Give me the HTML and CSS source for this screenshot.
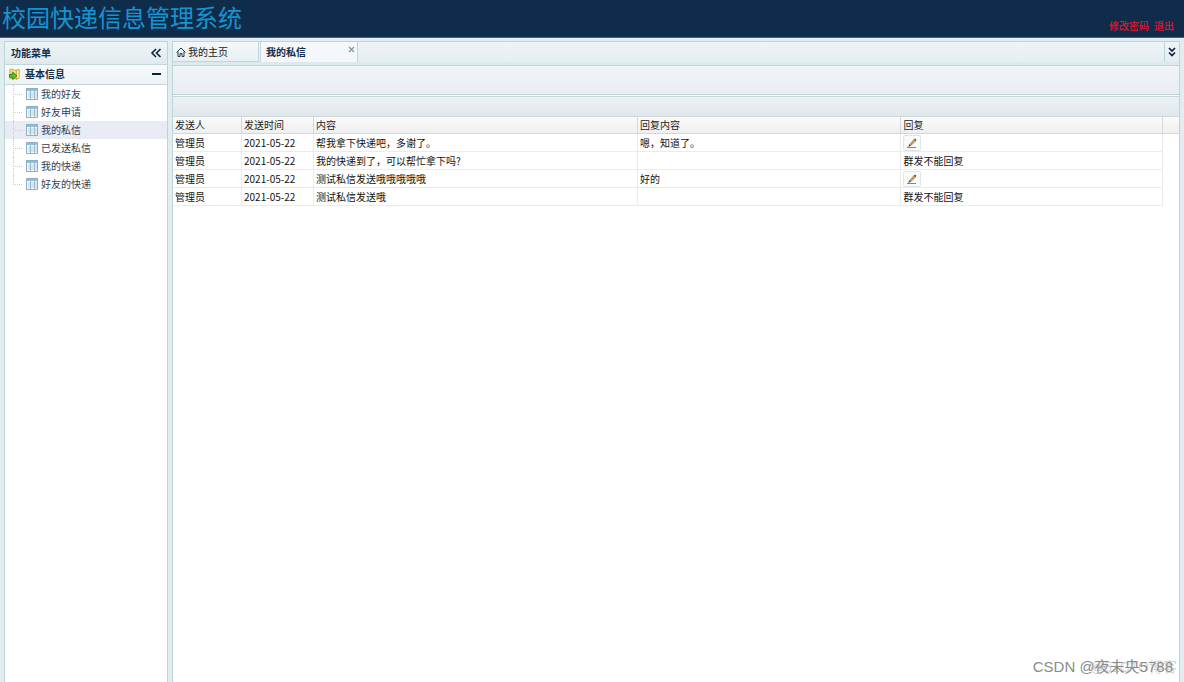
FILE: index.html
```html
<!DOCTYPE html>
<html lang="zh-CN">
<head>
<meta charset="utf-8">
<title>校园快递信息管理系统</title>
<link rel="stylesheet" href="styles.css">
</head>
<body>
<svg class="defs" aria-hidden="true">
  <symbol id="grid" viewBox="0 0 12 12">
    <rect x="0.5" y="0.5" width="11" height="11" fill="#f3f8fb" stroke="#8fb0c4"/>
    <path d="M1 1h10v2H1z" fill="#92bdd6"/>
    <path d="M4.5 3v8M8.5 3v8" stroke="#9bbccd"/>
    <path d="M2 5h2M5 5h3M9 5h2M2 7h2M5 7h3M9 7h2M2 9h2M5 9h3M9 9h2" stroke="#b7d0df"/>
  </symbol>
  <symbol id="pencil" viewBox="0 0 12 12">
    <path d="M3.500 7.500 8 2.500l1.500 1.500L5 8.500z" fill="#c9a25c" stroke="#8a6d3c" stroke-width=".6"/>
    <path d="m8 2.500 1-1L10.500 3l-1 1z" fill="#5a3d47"/>
    <path d="m3.500 7.500-1.500 2.500 3-1.500z" fill="#343434"/>
    <path d="M1 10.500h9" stroke="#7c878c"/>
  </symbol>
</svg>
<header class="banner">
  <h1>校园快递信息管理系统</h1>
  <nav class="account"><a href="#password">修改密码</a><a href="#logout">退出</a></nav>
</header>
<div class="shell">
  <aside class="sidebar">
    <div class="side-title"><h2>功能菜单</h2>
      <button class="tool" aria-label="收起菜单"><svg width="12" height="12" viewBox="0 0 12 12"><path d="M6 2 2 6l4 4M10.500 2l-4 4 4 4" fill="none" stroke="#0d223f" stroke-width="1.600"/></svg></button>
    </div>
    <div class="group-title">
      <svg width="12" height="14" viewBox="0 0 13 14"><path d="M1 4V2h4l1 1h4v9H1z" fill="#f5dc83" stroke="#c8a83d"/><path d="m8 3 3-1v9l-3 2z" fill="#fff0a8" stroke="#c3a33c"/><path d="M.5 7.500H4V5l4.500 4L4 13v-2.500H.5z" fill="#62bf32" stroke="#26851d"/></svg>
      <h3>基本信息</h3>
      <button class="tool" aria-label="折叠基本信息"><svg width="12" height="12" viewBox="0 0 12 12"><path d="M2 6h9" stroke="#0d223f" stroke-width="2"/></svg></button>
    </div>
    <ul class="tree">
      <li><a href="#friends"><svg width="12" height="12"><use href="#grid"/></svg>我的好友</a></li>
      <li><a href="#requests"><svg width="12" height="12"><use href="#grid"/></svg>好友申请</a></li>
      <li class="selected"><a href="#messages"><svg width="12" height="12"><use href="#grid"/></svg>我的私信</a></li>
      <li><a href="#sent"><svg width="12" height="12"><use href="#grid"/></svg>已发送私信</a></li>
      <li><a href="#parcels"><svg width="12" height="12"><use href="#grid"/></svg>我的快递</a></li>
      <li><a href="#friend-parcels"><svg width="12" height="12"><use href="#grid"/></svg>好友的快递</a></li>
    </ul>
  </aside>
  <main class="content">
    <div class="tabs">
      <button class="tab home"><svg width="10" height="10" viewBox="0 0 10 10"><path d="M.5 5.500 5 1l4.500 4.500M2 4.500v5h2V6.500h2v3h2v-5" fill="none" stroke="#263b52"/></svg>我的主页</button>
      <div class="tab current"><button class="tab-name">我的私信</button><button class="close" aria-label="关闭我的私信"><svg width="7" height="7" viewBox="0 0 7 7"><path d="m1 1 5 5M6 1 1 6" stroke="#8297a3" stroke-width="1.300"/></svg></button></div>
      <button class="more" aria-label="更多"><svg width="10" height="10" viewBox="0 0 10 10"><path d="m2 1 3 3 3-3M2 5.500l3 3 3-3" fill="none" stroke="#0d223f" stroke-width="1.700"/></svg></button>
    </div>
    <div class="toolbar"></div>
    <div class="caption"></div>
    <table class="messages">
      <colgroup><col class="c-sender"><col class="c-time"><col class="c-body"><col class="c-answer"><col><col class="c-end"></colgroup>
      <thead><tr><th>发送人</th><th>发送时间</th><th>内容</th><th>回复内容</th><th>回复</th><th></th></tr></thead>
      <tbody>
        <tr><td>管理员</td><td>2021-05-22</td><td>帮我拿下快递吧，多谢了。</td><td>嗯，知道了。</td><td><button class="edit" aria-label="回复"><svg width="12" height="12"><use href="#pencil"/></svg></button></td><td></td></tr>
        <tr><td>管理员</td><td>2021-05-22</td><td>我的快递到了，可以帮忙拿下吗?</td><td></td><td>群发不能回复</td><td></td></tr>
        <tr><td>管理员</td><td>2021-05-22</td><td>测试私信发送哦哦哦哦哦</td><td>好的</td><td><button class="edit" aria-label="回复"><svg width="12" height="12"><use href="#pencil"/></svg></button></td><td></td></tr>
        <tr><td>管理员</td><td>2021-05-22</td><td>测试私信发送哦</td><td></td><td>群发不能回复</td><td></td></tr>
      </tbody>
    </table>
  </main>
</div>
<div class="mark mark-small">@51CTO博客</div>
<div class="mark">CSDN @夜未央5788</div>
</body>
</html>
```
FILE: styles.css
```css
* { box-sizing: border-box; }
body {
  margin: 0;
  height: 100vh;
  display: flex;
  flex-direction: column;
  overflow: hidden;
  background: #e1edf0;
  color: #222;
  font: 10px/16px "Noto Sans CJK SC", sans-serif;
}
h1, h2, h3, ul { margin: 0; padding: 0; }
h2, h3 { font-size: 10px; color: #172d49; }
button { font: inherit; color: inherit; padding: 0; border: 0; background: none; }
svg { display: block; flex: none; }
a { text-decoration: none; color: inherit; }
.defs { position: absolute; width: 0; height: 0; }
.banner {
  display: flex;
  justify-content: space-between;
  align-items: flex-end;
  height: 38px;
  padding: 0 10px 3px 2px;
  background: #102c4b;
  border-bottom: 1px solid #4b6078;
}
.banner h1 { font-size: 24px; line-height: 34px; font-weight: 400; color: #1594d2; }
.account { display: flex; gap: 5px; color: #e0162c; font-weight: 500; }
.shell { flex: 1; display: flex; gap: 4px; padding: 3px 4px 0; min-height: 0; }
.sidebar { width: 164px; flex: none; background: #fff; border: 1px solid #bcd3d8; border-bottom: 0; }
.side-title, .group-title { display: flex; align-items: center; border-bottom: 1px solid #c3d7db; }
.side-title { height: 23px; padding: 0 5px 0 6px; background: linear-gradient(#eff4f7, #e0eaee); }
.group-title { height: 20px; gap: 4px; padding: 0 5px 1px 4px; background: linear-gradient(#f8fafb, #edf2f4); }
.tool { margin-left: auto; }
.tree { list-style: none; color: #333e52; }
.tree li { position: relative; height: 18px; padding-left: 21px; }
.tree li::before {
  content: "";
  position: absolute;
  left: 8px;
  top: 0;
  width: 8px;
  height: 9px;
  border: dotted #c9ced4;
  border-width: 0 0 1px 1px;
}
.tree li:not(:last-child)::after {
  content: "";
  position: absolute;
  left: 8px;
  top: 9px;
  height: 9px;
  border-left: 1px dotted #c9ced4;
}
.tree .selected { background: #e8ebf4; }
.tree a { display: flex; align-items: center; gap: 3px; height: 18px; }
.content { flex: 1; min-width: 0; background: #fff; border: 1px solid #bcd3d8; border-bottom: 0; }
.tabs {
  display: flex;
  gap: 1px;
  height: 23px;
  border-bottom: 3px solid #dceaec;
  background: linear-gradient(#eef4f7, #e5eef2);
}
.tab { display: flex; border: 1px solid #c0d5da; border-width: 0 1px 1px 0; }
.home { width: 86px; align-items: center; gap: 2px; padding-left: 3px; background: linear-gradient(#f5f8fa, #e8eff2); }
.current { width: 98px; justify-content: space-between; align-items: flex-start; padding: 2px 2px 0 5px; border-width: 0 1px; border-left-color: #cadbe0; background: #f4f8fa; }
.tab-name { font-weight: 700; color: #172d49; }
.close { padding-top: 2px; }
.more { width: 15px; margin-left: auto; padding-left: 2px; border-left: 1px solid #bcd3d8; }
.toolbar { height: 30px; border: 1px solid #bdd3d9; border-width: 1px 0; background: linear-gradient(#f1f3f7, #e9edf2); }
.caption { height: 20px; border-top: 1px solid #c4d8dc; margin-top: 1px; background: linear-gradient(#ecf2f5, #dfe8ec); }
.messages { width: 100%; table-layout: fixed; border-collapse: separate; border-spacing: 0; }
.c-sender { width: 69px; }
.c-time { width: 72px; }
.c-body { width: 32.2%; }
.c-answer { width: 26.2%; }
.c-end { width: 16px; }
th, td { height: 18px; padding: 0 2px; text-align: left; white-space: nowrap; }
th { font-weight: 400; border: 1px solid #d3d8da; border-width: 1px 1px 1px 0; background: linear-gradient(#fbfbfb, #eeeff0); }
td { border: 1px solid #ebebeb; border-width: 0 1px 1px 0; color: #111; }
th:last-child { border-right: 0; }
td:last-child { border: 0; }
.edit { display: grid; place-items: center; width: 18px; height: 16px; border: 1px solid #dce6ef; border-radius: 2px; background: #fafafa; }
.mark {
  position: absolute;
  right: 11px;
  bottom: 5px;
  font: 15px/20px "Liberation Sans", "Noto Sans CJK SC", sans-serif;
  color: #8b8b8b;
  pointer-events: none;
}
.mark-small { right: 7px; font-size: 14px; color: #d2d2d2; }
```
